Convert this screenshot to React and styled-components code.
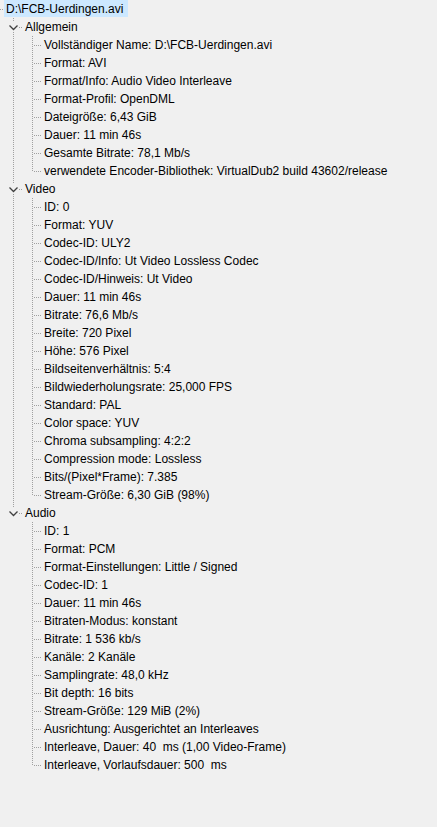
import React from 'react';
import styled, { createGlobalStyle } from 'styled-components';

const GlobalStyle = createGlobalStyle`
	html, body {
		margin: 0;
		padding: 0;
		background: #f0f0f0;
	}
`;

const tree = {
	label: 'D:\\FCB-Uerdingen.avi',
	sections: [
		{
			title: 'Allgemein',
			items: [
				'Vollständiger Name: D:\\FCB-Uerdingen.avi',
				'Format: AVI',
				'Format/Info: Audio Video Interleave',
				'Format-Profil: OpenDML',
				'Dateigröße: 6,43 GiB',
				'Dauer: 11 min 46s',
				'Gesamte Bitrate: 78,1 Mb/s',
				'verwendete Encoder-Bibliothek: VirtualDub2 build 43602/release',
			],
		},
		{
			title: 'Video',
			items: [
				'ID: 0',
				'Format: YUV',
				'Codec-ID: ULY2',
				'Codec-ID/Info: Ut Video Lossless Codec',
				'Codec-ID/Hinweis: Ut Video',
				'Dauer: 11 min 46s',
				'Bitrate: 76,6 Mb/s',
				'Breite: 720 Pixel',
				'Höhe: 576 Pixel',
				'Bildseitenverhältnis: 5:4',
				'Bildwiederholungsrate: 25,000 FPS',
				'Standard: PAL',
				'Color space: YUV',
				'Chroma subsampling: 4:2:2',
				'Compression mode: Lossless',
				'Bits/(Pixel*Frame): 7.385',
				'Stream-Größe: 6,30 GiB (98%)',
			],
		},
		{
			title: 'Audio',
			items: [
				'ID: 1',
				'Format: PCM',
				'Format-Einstellungen: Little / Signed',
				'Codec-ID: 1',
				'Dauer: 11 min 46s',
				'Bitraten-Modus: konstant',
				'Bitrate: 1 536 kb/s',
				'Kanäle: 2 Kanäle',
				'Samplingrate: 48,0 kHz',
				'Bit depth: 16 bits',
				'Stream-Größe: 129 MiB (2%)',
				'Ausrichtung: Ausgerichtet an Interleaves',
				'Interleave, Dauer: 40  ms (1,00 Video-Frame)',
				'Interleave, Vorlaufsdauer: 500  ms',
			],
		},
	],
};

const DOT = '#a0a0a0';

// tree connector drawings
function RootStub() {
	return (
		<Cell $w={4}>
			<svg width='4' height='18'>
				<line x1='0' y1='9.5' x2='4' y2='9.5' stroke={DOT} strokeDasharray='1 1' />
			</svg>
		</Cell>
	);
}

function SectionBranch({ last }) {
	return (
		<Cell $w={23}>
			<svg width='23' height='18'>
				<line x1='13.5' y1='0' x2='13.5' y2='4' stroke={DOT} strokeDasharray='1 1' />
				{!last && (
					<line x1='13.5' y1='14' x2='13.5' y2='18' stroke={DOT} strokeDasharray='1 1' />
				)}
				<line x1='19' y1='9.5' x2='23' y2='9.5' stroke={DOT} strokeDasharray='1 1' />
				<polyline
					points='9.5,7.5 13.5,11.5 17.5,7.5'
					fill='none'
					stroke='#404040'
					strokeWidth='1.3'
				/>
			</svg>
		</Cell>
	);
}

function Guide({ show }) {
	return (
		<Cell $w={23}>
			{show && (
				<svg width='23' height='18'>
					<line x1='13.5' y1='0' x2='13.5' y2='18' stroke={DOT} strokeDasharray='1 1' />
				</svg>
			)}
		</Cell>
	);
}

function LeafBranch({ last }) {
	return (
		<Cell $w={19}>
			<svg width='19' height='18'>
				<line
					x1='9.5'
					y1='0'
					x2='9.5'
					y2={last ? '10' : '18'}
					stroke={DOT}
					strokeDasharray='1 1'
				/>
				<line x1='11' y1='9.5' x2='19' y2='9.5' stroke={DOT} strokeDasharray='1 1' />
			</svg>
		</Cell>
	);
}

export default function App() {
	const { label, sections } = tree;
	return (
		<>
			<GlobalStyle />
			<TreeView>
				<Row>
					<RootStub />
					<Label $selected>{label}</Label>
				</Row>
				{sections.map((section, si) => {
					const lastSection = si === sections.length - 1;
					return (
						<React.Fragment key={section.title}>
							<Row>
								<SectionBranch last={lastSection} />
								<Label>{section.title}</Label>
							</Row>
							{section.items.map((item, ii) => (
								<Row key={ii}>
									<Guide show={!lastSection} />
									<LeafBranch last={ii === section.items.length - 1} />
									<Label>{item}</Label>
								</Row>
							))}
						</React.Fragment>
					);
				})}
			</TreeView>
		</>
	);
}

const TreeView = styled.div`
	width: 437px;
	min-height: 827px;
	box-sizing: border-box;
	background: #f0f0f0;
	font-family: 'Liberation Sans', Arial, sans-serif;
	font-size: 12px;
	color: #000;
`;
const Row = styled.div`
	display: flex;
	align-items: stretch;
	height: 18px;
	white-space: pre;
`;
const Cell = styled.div`
	flex: 0 0 ${(p) => p.$w}px;
	width: ${(p) => p.$w}px;
	height: 18px;
	svg {
		display: block;
	}
`;
const Label = styled.div`
	padding: ${(p) => (p.$selected ? '0 5px 0 2px' : '0 2px')};
	height: ${(p) => (p.$selected ? '17px' : '18px')};
	line-height: 18px;
	background: ${(p) => (p.$selected ? '#cce8ff' : 'transparent')};
`;
